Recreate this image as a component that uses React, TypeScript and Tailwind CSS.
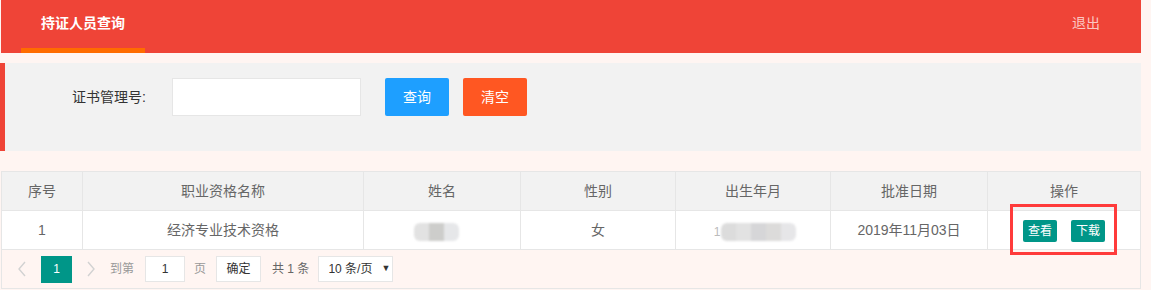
import React from 'react';

const FONT = { fontFamily: '"Liberation Sans", "Noto Sans CJK SC", sans-serif' };

const columns = ['序号', '职业资格名称', '姓名', '性别', '出生年月', '批准日期', '操作'];

// blurred placeholder for masked personal data
const Blur = ({ shades }: { shades: string[] }) => (
  <div className="flex blur-[1px] rounded-[6px] overflow-hidden">
    {shades.map((c, i) => (
      <div key={i} className="h-[18px] w-[15px]" style={{ backgroundColor: c }} />
    ))}
  </div>
);

const Chevron = ({ dir }: { dir: 'left' | 'right' }) => (
  <svg className="shrink-0 block" width="10" height="16" viewBox="0 0 10 16" fill="none" stroke="#d2d2d2" strokeWidth="1.4">
    {dir === 'left' ? <path d="M8 1 L2 8 L8 15" /> : <path d="M2 1 L8 8 L2 15" />}
  </svg>
);

const App = () => {
  return (
    <div className="relative w-[1151px] h-[290px] overflow-hidden bg-[#fff5f2] text-[14px]" style={FONT}>
      {/* top nav */}
      <div className="ml-px w-[1140px] h-[53px] bg-[#ef4437] flex justify-between">
        <div className="relative ml-[20px] h-full px-5">
          <div className="pt-[13px] leading-5 font-bold text-white">持证人员查询</div>
          <div className="absolute left-0 right-0 bottom-0 h-[5px] bg-[#ff6c00]" />
        </div>
        <div className="pt-[13px] pr-[41px] leading-5 text-[#fbc8c3]">退出</div>
      </div>

      {/* search panel */}
      <div className="mt-[10px] w-[1141px] h-[88px] bg-[#f2f2f2] border-l-[5px] border-[#ef4437] pt-[15px]">
        <div className="flex items-center">
          <label className="ml-[67px] w-[76px] text-[#333] leading-5 whitespace-nowrap">证书管理号:</label>
          <input className="ml-[24px] w-[189px] h-[38px] bg-white border border-[#e6e6e6] outline-none px-2" />
          <button className="ml-[24px] h-[38px] w-[64px] rounded-[2px] bg-[#1e9fff] text-white">查询</button>
          <button className="ml-[14px] h-[38px] w-[64px] rounded-[2px] bg-[#ff5722] text-white">清空</button>
        </div>
      </div>

      {/* result table */}
      <div className="mt-[20px] ml-px w-[1140px] border border-[#e6e6e6] text-[#666]">
        <div className="grid grid-cols-[81px_281px_157px_155px_155px_157px_1fr] bg-[#f2f2f2]">
          {columns.map((c, i) => (
            <div
              key={c}
              className={`h-[39px] flex items-center justify-center border-b border-[#e6e6e6] ${i < 6 ? 'border-r' : ''}`}
            >
              {c}
            </div>
          ))}
        </div>
        <div className="grid grid-cols-[81px_281px_157px_155px_155px_157px_1fr] bg-white">
          <div className="h-[39px] flex items-center justify-center border-b border-r border-[#e6e6e6]">1</div>
          <div className="h-[39px] flex items-center justify-center border-b border-r border-[#e6e6e6]">经济专业技术资格</div>
          <div className="h-[39px] flex items-center justify-center border-b border-r border-[#e6e6e6]">
            <div className="mr-[11px] mt-[3px]">
              <Blur shades={['#e2e2e2', '#cdcdcb', '#e6e7e9']} />
            </div>
          </div>
          <div className="h-[39px] flex items-center justify-center border-b border-r border-[#e6e6e6]">女</div>
          <div className="h-[39px] flex items-center justify-center border-b border-r border-[#e6e6e6]">
            <div className="flex items-center ml-[4px] mt-[3px]">
              <span className="text-[#bbb] text-[12px] mr-px">1</span>
              <Blur shades={['#dcdcdc', '#e2e2e2', '#d6d6d8', '#dcdbda', '#e6e6e8']} />
            </div>
          </div>
          <div className="h-[39px] flex items-center justify-center border-b border-r border-[#e6e6e6]">2019年11月03日</div>
          <div className="h-[39px] flex items-center justify-center gap-[14px] border-b border-[#e6e6e6] pt-[1px]">
            <button className="h-[22px] w-[34px] rounded-[2px] bg-[#009688] text-white text-[12px]">查看</button>
            <button className="h-[22px] w-[34px] rounded-[2px] bg-[#009688] text-white text-[12px]">下载</button>
          </div>
        </div>

        {/* pager */}
        <div className="h-[38px] flex items-center pl-[15px] text-[12px] whitespace-nowrap">
          <Chevron dir="left" />
          <span className="ml-[14px] h-[27px] w-[31px] shrink-0 bg-[#009688] text-white flex items-center justify-center">1</span>
          <span className="ml-[14px]"><Chevron dir="right" /></span>
          <span className="ml-[14px] text-[#999]">到第</span>
          <span className="ml-[11px] h-[26px] w-[40px] shrink-0 bg-white border border-[#e6e6e6] flex items-center justify-center text-[#333]">1</span>
          <span className="ml-[9px] text-[#999]">页</span>
          <span className="ml-[10px] h-[26px] w-[45px] shrink-0 bg-white border border-[#e6e6e6] flex items-center justify-center text-[#333]">确定</span>
          <span className="ml-[11px] text-[#666]">共 1 条</span>
          <span className="ml-[9px] h-[26px] w-[75px] shrink-0 bg-white border border-[#e6e6e6] flex items-center pl-[9px] text-[#333]">
            10 条/页
            <span className="ml-[9px] text-[9px]">▼</span>
          </span>
        </div>
      </div>

      {/* annotation */}
      <div className="absolute left-[1010px] top-[204px] w-[107px] h-[51px] border-[3px] border-[#ff3b3b]" />
    </div>
  );
};

export default App;
